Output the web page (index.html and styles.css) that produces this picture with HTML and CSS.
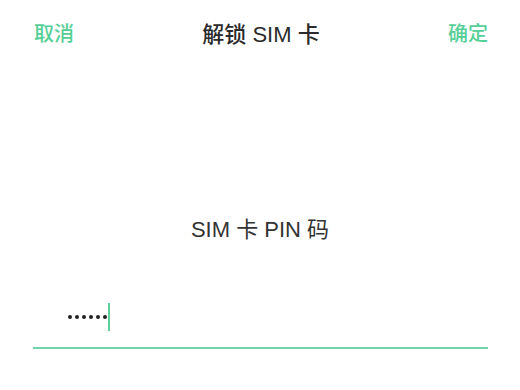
FILE: index.html
```html
<!DOCTYPE html>
<html lang="zh-CN">
<head>
    <meta charset="UTF-8">
    <title>解锁 SIM 卡</title>
    <link rel="stylesheet" href="styles.css">
</head>
<body>
    <div class="header">
        <span class="action">取消</span>
        <span class="title">解锁 SIM 卡</span>
        <span class="action">确定</span>
    </div>

    <div class="label">SIM 卡 PIN 码</div>

    <div class="field">
        <span class="dot"></span>
        <span class="dot"></span>
        <span class="dot"></span>
        <span class="dot"></span>
        <span class="dot"></span>
        <span class="dot"></span>
        <span class="cursor"></span>
    </div>
</body>
</html>
```

FILE: styles.css
```css
body {
    margin: 0;
    background-color: #fff;
    font-family: "Liberation Sans", "Noto Sans CJK SC", sans-serif;
    color: #333;
}

.header {
    display: flex;
    justify-content: space-between;
    align-items: center;
    padding: 16px 32px 0 34px;
    height: 32px;
}

.action {
    color: #55cf97;
    font-size: 20px;
    font-weight: 500;
}

.title {
    font-size: 22px;
    font-weight: 500;
    color: #2b2b2b;
}

.label {
    text-align: center;
    font-size: 22px;
    color: #333;
    margin-top: 163px;
}

.field {
    display: flex;
    align-items: center;
    gap: 3px;
    margin: 60px 32px 0 33px;
    padding: 0 0 16px 35px;
    border-bottom: 2px solid #6dd6aa;
    height: 28px;
}

.dot {
    width: 4px;
    height: 4px;
    border-radius: 50%;
    background-color: #222;
}

.cursor {
    width: 2px;
    height: 28px;
    margin-left: -2px;
    background-color: #5ecf9c;
}
```
